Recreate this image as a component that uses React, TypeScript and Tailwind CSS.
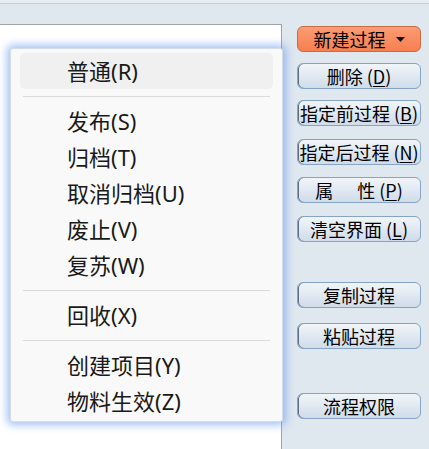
import React from 'react'

const menuFont = {fontFamily: '"Noto Sans", "Noto Sans CJK SC", sans-serif'}
const btnFont = {fontFamily: '"Noto Sans CJK SC", sans-serif'}

type Item = {label: string; key: string} | 'sep'

const items: Item[] = [
    {label: '普通', key: 'R'},
    'sep',
    {label: '发布', key: 'S'},
    {label: '归档', key: 'T'},
    {label: '取消归档', key: 'U'},
    {label: '废止', key: 'V'},
    {label: '复苏', key: 'W'},
    'sep',
    {label: '回收', key: 'X'},
    'sep',
    {label: '创建项目', key: 'Y'},
    {label: '物料生效', key: 'Z'},
]

function Btn({children, className = ''}: {children: React.ReactNode; className?: string}) {
    return (
        <div
            className={`h-[26px] w-[124px] flex items-center justify-center rounded-[6px] border border-[#86a5c4] bg-gradient-to-b from-[#f1f5f9] to-[#d0dcea] text-[18px] leading-none text-black shadow-[inset_1px_0_0_#5a6f86] whitespace-nowrap ${className}`}
            style={btnFont}
        >
            {children}
        </div>
    )
}

function Key({k}: {k: string}) {
    return (
        <span className="ml-[4px]">
            (<span className="underline underline-offset-2">{k}</span>)
        </span>
    )
}

export default function App() {
    return (
        <div className="relative w-[429px] h-[449px] overflow-hidden bg-[#dfe7ef] flex flex-col">
            <div className="h-[4px] bg-[#e8edf2] border-b border-[#c3ceda]" />
            <div className="flex flex-1">
                <div className="mt-[20px] w-[282px] bg-white border-t border-r border-[#a3a3a3]" />
                <div className="flex flex-col pl-[15px] pt-[22px]">
                    <div
                        className="h-[26px] w-[124px] flex items-center justify-center gap-[10px] rounded-[6px] border border-[#c56b45] bg-gradient-to-b from-[#fb9c72] to-[#f67f50] text-[18px] leading-none text-black"
                        style={btnFont}
                    >
                        <span>新建过程</span>
                        <svg width="9" height="5" viewBox="0 0 9 5">
                            <path d="M0 0h9L4.5 5z" fill="#111" />
                        </svg>
                    </div>
                    <Btn className="mt-[11px]">
                        删除<Key k="D" />
                    </Btn>
                    <Btn className="mt-[11px]">
                        指定前过程<Key k="B" />
                    </Btn>
                    <Btn className="mt-[13px]">
                        指定后过程<Key k="N" />
                    </Btn>
                    <Btn className="mt-[12px]">
                        <span className="mr-[24px]">属</span>性<Key k="P" />
                    </Btn>
                    <Btn className="mt-[13px]">
                        清空界面<Key k="L" />
                    </Btn>
                    <Btn className="mt-[40px]">复制过程</Btn>
                    <Btn className="mt-[15px]">粘贴过程</Btn>
                    <Btn className="mt-[44px]">流程权限</Btn>
                </div>
            </div>

            <div
                className="absolute left-[10px] top-[48px] w-[273px] h-[374px] bg-[#f9f9f9] border border-[#d6dce4] rounded-[3px] shadow-[0_0_9px_3px_rgba(100,150,240,0.6)] pt-[4px] px-[9px]"
                style={menuFont}
            >
                {items.map((it, i) =>
                    it === 'sep' ? (
                        <div key={i} className="h-[14px] flex items-center px-[3px]">
                            <div className="h-px w-full bg-[#dadada]" />
                        </div>
                    ) : (
                        <div
                            key={i}
                            className={`h-[36px] flex items-center pl-[47px] text-[22px] text-[#1a1a1a] rounded-[5px] ${i === 0 ? 'bg-[#f0f0f0]' : ''}`}
                        >
                            {it.label}({it.key})
                        </div>
                    )
                )}
            </div>
        </div>
    )
}
